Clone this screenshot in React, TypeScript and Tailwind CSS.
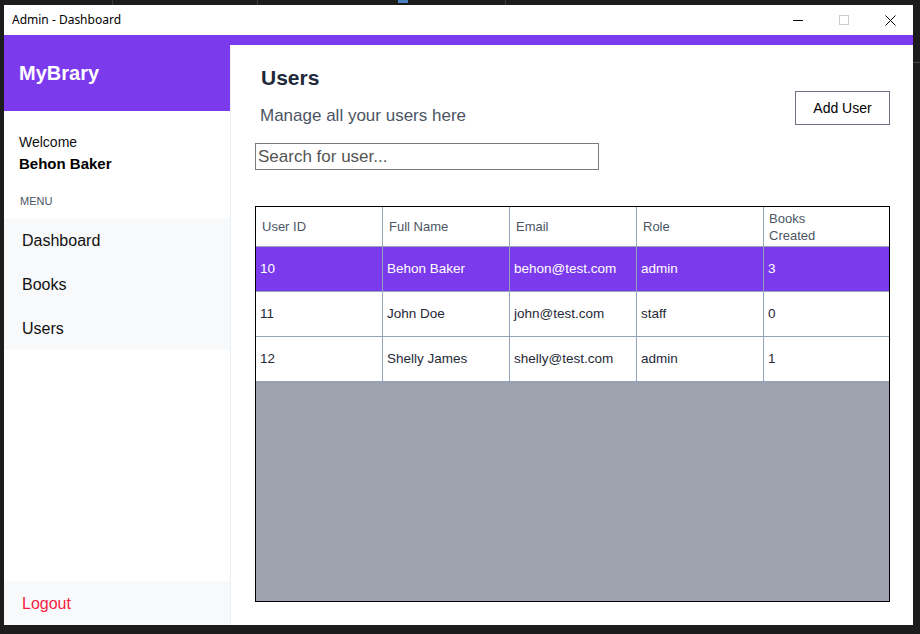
const users = [
  { id: 10, name: "Behon Baker", email: "behon@test.com", role: "admin", books: 3 },
  { id: 11, name: "John Doe", email: "john@test.com", role: "staff", books: 0 },
  { id: 12, name: "Shelly James", email: "shelly@test.com", role: "admin", books: 1 },
];

const font = "font-['Liberation_Sans',Arial,sans-serif]";

export default function App() {
  return (
    <div className={`relative w-[920px] h-[634px] bg-[#1c1c1c] overflow-hidden ${font}`}>
      {/* bits of the window behind */}
      <div className="absolute left-[112px] top-0 w-px h-[5px] bg-[#3a3a3a]" />
      <div className="absolute left-[257px] top-0 w-px h-[5px] bg-[#3a3a3a]" />
      <div className="absolute left-[505px] top-0 w-px h-[5px] bg-[#3a3a3a]" />
      <div className="absolute left-[398px] top-0 w-[10px] h-[3px] bg-[#4a7fc0]" />
      <div className="absolute left-[913px] top-[62px] w-[7px] h-px bg-[#444]" />

      <div className="absolute left-[4px] top-[5px] w-[909px] h-[620px] bg-white flex flex-col">
        {/* title bar */}
        <div className="h-[30px] flex items-center justify-between shrink-0">
          <span className="pl-[8px] text-[12px] text-black font-['Noto_Sans',sans-serif]">Admin - Dashboard</span>
          <div className="flex items-center h-full">
            <div className="w-[46px] h-full flex items-center justify-center">
              <div className="w-[10px] h-px bg-black" />
            </div>
            <div className="w-[46px] h-full flex items-center justify-center">
              <div className="w-[10px] h-[10px] border border-[#cccccc]" />
            </div>
            <div className="w-[46px] h-full flex items-center justify-center">
              <svg width="11" height="11" viewBox="0 0 11 11">
                <path d="M0.5 0.5 L10.5 10.5 M10.5 0.5 L0.5 10.5" stroke="#000" strokeWidth="1" />
              </svg>
            </div>
          </div>
        </div>

        <div className="flex flex-1 min-h-0">
          {/* sidebar */}
          <aside className="w-[226px] shrink-0 flex flex-col">
            <div className="h-[76px] bg-[#7c3aed] flex items-center pl-[15px]">
              <span className="text-white font-bold text-[20px]">MyBrary</span>
            </div>
            <div className="pl-[15px] pt-[21px]">
              <div className="h-[20px] leading-[20px] text-[14px] text-[#111]">Welcome</div>
              <div className="mt-px h-[22px] leading-[22px] text-[15px] font-bold text-black">Behon Baker</div>
              <div className="mt-[17px] h-[18px] leading-[18px] text-[11px] text-[#4b5563] pl-px">MENU</div>
            </div>
            <nav className="mt-[8px] bg-[#f8f9fb] flex flex-col">
              {["Dashboard", "Books", "Users"].map((m) => (
                <div key={m} className="h-[44px] flex items-center pl-[18px] pt-px text-[16px] text-[#111]">
                  {m}
                </div>
              ))}
            </nav>
            <div className="flex-1" />
            <div className="h-[44px] bg-[#f8f9fb] flex items-center pl-[18px] pt-px text-[16px] text-[#f51c3f]">
              Logout
            </div>
          </aside>

          {/* main */}
          <main className="flex-1 flex flex-col">
            <div className="h-[10px] bg-[#7c3aed] shrink-0" />
            <div className="flex-1 flex flex-col border-l border-[#edf1f7]">
              <div className="flex justify-between pl-[24px] pr-[23px]">
                <div className="flex flex-col">
                  <h1 className="mt-[19px] ml-[6px] h-[28px] leading-[28px] text-[21px] font-bold text-[#1e293b]">Users</h1>
                  <p className="mt-[12px] ml-[5px] h-[24px] leading-[24px] text-[17px] text-[#4b5563]">Manage all your users here</p>
                  <input
                    placeholder="Search for user..."
                    className="mt-[15px] w-[344px] h-[27px] border border-[#7a7a7a] px-[2px] text-[17px] text-[#333] placeholder-[#555] outline-none"
                  />
                </div>
                <button className="mt-[46px] w-[95px] h-[34px] border border-[#6b7280] text-[14px] text-black bg-white">
                  Add User
                </button>
              </div>

              <div className="mt-[36px] ml-[24px] mr-[23px] h-[396px] border border-black bg-[#9ca3af] flex flex-col">
                <div className="h-[40px] bg-white flex border-b border-[#94a3b8] text-[13px] text-[#4b5563]">
                  {["User ID", "Full Name", "Email", "Role"].map((h) => (
                    <div key={h} className="w-[127px] border-r border-[#94a3b8] flex items-center pl-[6px] pt-px">
                      {h}
                    </div>
                  ))}
                  <div className="flex-1 flex items-center pl-[5px] leading-[17px]">
                    Books<br />Created
                  </div>
                </div>
                {users.map((u, i) => {
                  const sel = i === 0;
                  return (
                    <div
                      key={u.id}
                      className={`h-[45px] flex border-b border-[#94a3b8] text-[13.5px] ${sel ? "bg-[#7c3aed] text-white" : "bg-white text-[#1f2937]"}`}
                    >
                      {[u.id, u.name, u.email, u.role].map((v, j) => (
                        <div key={j} className="w-[127px] border-r border-[#94a3b8] flex items-center pl-[4px] pt-px">
                          {v}
                        </div>
                      ))}
                      <div className="flex-1 flex items-center pl-[4px] pt-px">{u.books}</div>
                    </div>
                  );
                })}
              </div>
            </div>
          </main>
        </div>
      </div>
    </div>
  );
}
